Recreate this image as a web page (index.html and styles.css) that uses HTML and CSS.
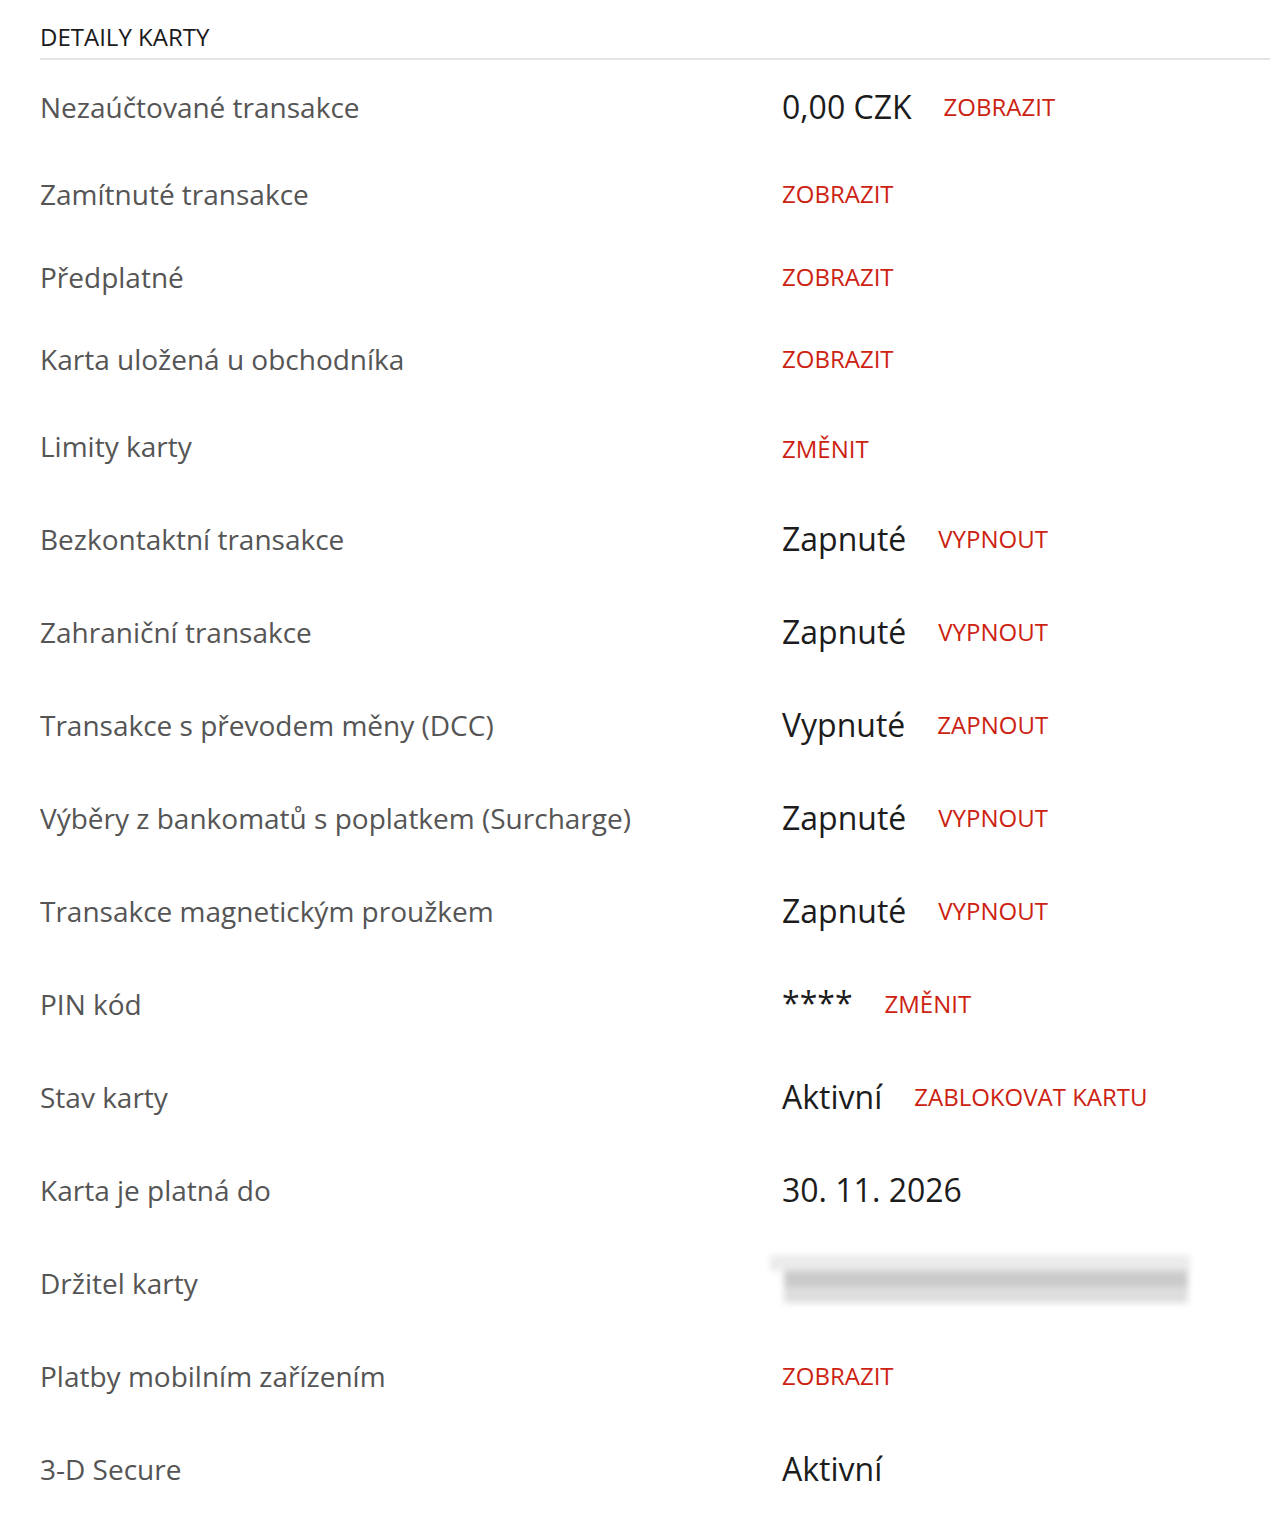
FILE: index.html
```html
<!DOCTYPE html>
<html lang="cs">
<head>
<meta charset="utf-8">
<title>Detaily karty</title>
<link rel="stylesheet" href="styles.css">
</head>
<body>
<section class="card-details">
  <h2 class="section-title">DETAILY KARTY</h2>
  <div class="rows">
    <div class="row r1"><div class="label">Nezaúčtované transakce</div><div class="value"><span class="val">0,00 CZK</span><a class="action">ZOBRAZIT</a></div></div>
    <div class="row r2"><div class="label">Zamítnuté transakce</div><div class="value"><a class="action">ZOBRAZIT</a></div></div>
    <div class="row r3"><div class="label">Předplatné</div><div class="value"><a class="action">ZOBRAZIT</a></div></div>
    <div class="row r4"><div class="label">Karta uložená u obchodníka</div><div class="value"><a class="action">ZOBRAZIT</a></div></div>
    <div class="row r5"><div class="label">Limity karty</div><div class="value"><a class="action low">ZMĚNIT</a></div></div>
    <div class="row"><div class="label">Bezkontaktní transakce</div><div class="value"><span class="val">Zapnuté</span><a class="action">VYPNOUT</a></div></div>
    <div class="row"><div class="label">Zahraniční transakce</div><div class="value"><span class="val">Zapnuté</span><a class="action">VYPNOUT</a></div></div>
    <div class="row"><div class="label">Transakce s převodem měny (DCC)</div><div class="value"><span class="val">Vypnuté</span><a class="action">ZAPNOUT</a></div></div>
    <div class="row"><div class="label">Výběry z bankomatů s poplatkem (Surcharge)</div><div class="value"><span class="val">Zapnuté</span><a class="action">VYPNOUT</a></div></div>
    <div class="row"><div class="label">Transakce magnetickým proužkem</div><div class="value"><span class="val">Zapnuté</span><a class="action">VYPNOUT</a></div></div>
    <div class="row"><div class="label">PIN kód</div><div class="value"><span class="val stars">****</span><a class="action">ZMĚNIT</a></div></div>
    <div class="row"><div class="label">Stav karty</div><div class="value"><span class="val">Aktivní</span><a class="action">ZABLOKOVAT KARTU</a></div></div>
    <div class="row"><div class="label">Karta je platná do</div><div class="value"><span class="val">30. 11. 2026</span></div></div>
    <div class="row"><div class="label">Držitel karty</div><div class="value"><div class="redacted"><span></span><span></span><span></span></div></div></div>
    <div class="row"><div class="label">Platby mobilním zařízením</div><div class="value"><a class="action">ZOBRAZIT</a></div></div>
    <div class="row last"><div class="label">3-D Secure</div><div class="value"><span class="val">Aktivní</span></div></div>
  </div>
</section>
</body>
</html>
```
FILE: styles.css
```css
html, body {
  margin: 0;
  padding: 0;
  background: #ffffff;
}
body {
  font-family: "Open Sans", "Noto Sans", "DejaVu Sans", sans-serif;
  color: #222;
}
.card-details {
  padding: 0 0 0 40px;
}
.section-title {
  margin: 0;
  padding-top: 22px;
  padding-bottom: 6px;
  font-size: 24px;
  line-height: 30px;
  font-weight: 400;
  color: #1a1a1a;
  border-bottom: 2px solid #e4e4e4;
}
.rows {
  padding-top: 27px;
}
.row {
  display: grid;
  grid-template-columns: 742px 1fr;
  align-items: center;
  height: 40px;
  margin-bottom: 53px;
}
.row.r1 { margin-bottom: 47px; }
.row.r2 { margin-bottom: 43px; }
.row.r3 { margin-bottom: 42px; }
.row.r4 { margin-bottom: 47px; }
.row.last { margin-bottom: 30px; }
.label {
  font-size: 28px;
  color: #555;
  line-height: 40px;
  white-space: nowrap;
}
.value {
  display: flex;
  align-items: center;
  gap: 32px;
  height: 40px;
}
.val {
  font-size: 32px;
  color: #1c1c1c;
  line-height: 40px;
}
.val.stars {
  position: relative;
  top: -1px;
}
.action {
  font-size: 24px;
  color: #cc2211;
  line-height: 40px;
  text-decoration: none;
  cursor: pointer;
}
.action.low {
  position: relative;
  top: 3px;
}
.redacted {
  margin-left: -26px;
  width: 448px;
  height: 84px;
  display: flex;
  flex-direction: column;
  justify-content: center;
  filter: blur(3px);
  position: relative;
  top: -4px;
}
.redacted span {
  display: block;
  height: 16px;
}
.redacted span:nth-child(1) { background: #ebebeb; margin: 0 14px 0 14px; }
.redacted span:nth-child(2) { background: #cacaca; margin: 0 16px 0 28px; }
.redacted span:nth-child(3) { background: #dedede; margin: 0 16px 0 28px; }
```
